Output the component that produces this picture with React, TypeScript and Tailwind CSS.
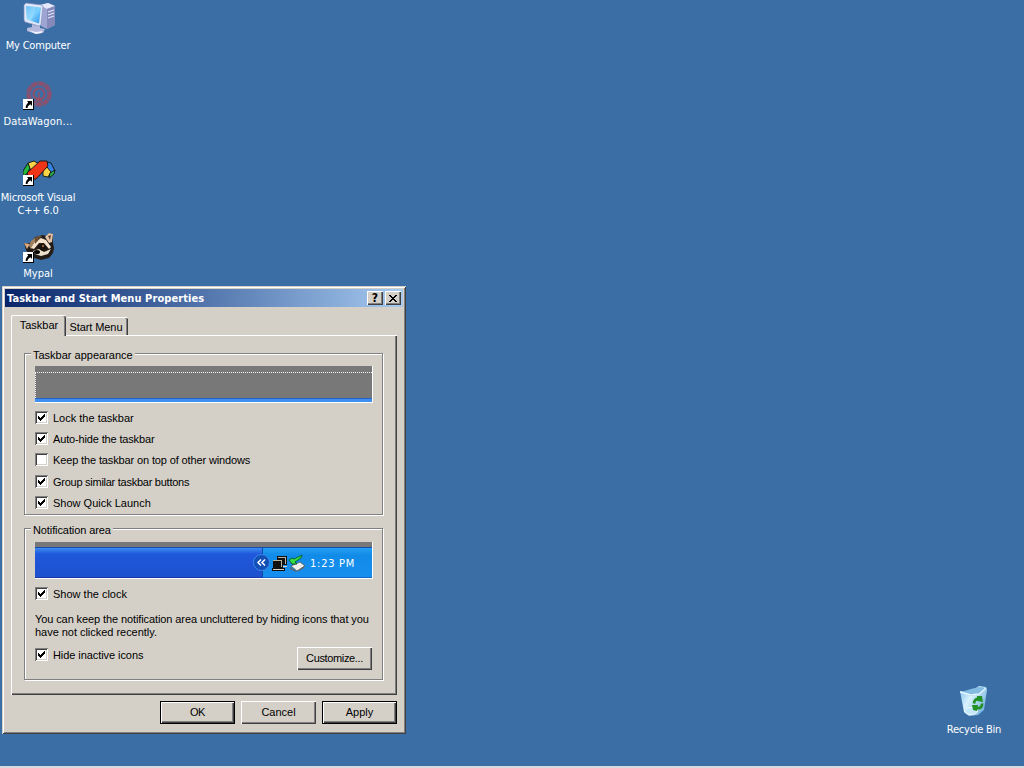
import type { ReactNode } from "react";

const SANS = "font-['Liberation_Sans',Arial,sans-serif]";
const TAHOMA = "font-['DejaVu_Sans_Condensed','DejaVu_Sans',sans-serif]";

const raised =
  "bg-[#d4d0c8] shadow-[inset_1px_1px_0_#fff,inset_-1px_-1px_0_#404040,inset_-2px_-2px_0_#808080]";

function ShortcutArrow() {
  return (
    <g>
      <rect x="0" y="22" width="11" height="11" fill="#000" />
      <rect x="0" y="22" width="10" height="10" fill="#fff" />
      <path d="M4 24h5v5l-1.700-1.700C5.500 28.500 4.500 29.500 4.500 31H2.800c-.3-2 .8-4 2.500-5.400z" fill="#000" />
    </g>
  );
}

function ComputerIcon() {
  return (
    <svg width="34" height="34" viewBox="0 0 34 34">
      <defs>
        <linearGradient id="scr" x1="0" y1="0" x2="1" y2="1">
          <stop offset="0" stopColor="#3ba6f0" />
          <stop offset=".5" stopColor="#7dd2ff" />
          <stop offset="1" stopColor="#2b8fe6" />
        </linearGradient>
      </defs>
      <path d="M17 3l8-2 7 3v19l-8 4-6-3z" fill="#9fa5d2" />
      <path d="M17 3l8-2 7 3-8 3z" fill="#e6e9f9" />
      <path d="M24 7l8-3v19l-8 4z" fill="#8489ba" />
      <path d="M25 10l6-2M25 13l6-2M25 16l6-2" stroke="#dfe4ff" strokeWidth="1.300" />
      <path d="M9 21l8 2v3l5 1-2 4-7 1-9-3v-3l5-1z" fill="#b3b8dc" />
      <path d="M5 28l8 2 7-1-2 2-5 1z" fill="#f2f3fc" />
      <path d="M1 3l2-2 16 2 1 2-2 18-2 1-14-4-1-2z" fill="#dfe6f8" stroke="#7f8cbc" strokeWidth=".7" />
      <path d="M3 4l15 1.500-2 16-12-4z" fill="url(#scr)" />
      <path d="M3 4l10 1-5 14-4-1.500z" fill="#b7e9ff" opacity=".4" />
    </svg>
  );
}

function DataWagonIcon() {
  return (
    <svg width="34" height="34" viewBox="0 0 34 34">
      <g fill="none" stroke="#a04a60">
        <circle cx="16" cy="17" r="10.500" strokeWidth="4.500" opacity=".45" />
        <circle cx="16" cy="17" r="10.500" strokeWidth="4" strokeDasharray="5 2" opacity=".6" />
        <circle cx="16" cy="17" r="5.500" strokeWidth="2.200" opacity=".8" />
        <path d="M16 15v11M13 25l3-5 3 5" strokeWidth="1.600" opacity=".8" />
      </g>
      <ShortcutArrow />
    </svg>
  );
}

function VisualCIcon() {
  return (
    <svg width="34" height="34" viewBox="0 0 34 34">
      <g stroke="#111" strokeWidth=".9" strokeLinejoin="round">
        <path d="M0 18l5-8 2 5-3 6-4 2z" fill="#25b83d" />
        <path d="M5 10l6-2 5 3-3 5-5 2z" fill="#f6d548" />
        <path d="M24 9l4 1 4 8-4 2-4-5z" fill="#3484e8" />
        <path d="M20 18l4-4 4 5-3 5-5-1z" fill="#f6d548" />
        <path d="M27 20l5-3-1 4-5 4z" fill="#29b34b" />
        <path d="M17 8l7 0 1 5-12 13-7 0-2-6z" fill="#ee3518" />
      </g>
      <ShortcutArrow />
    </svg>
  );
}

function RaccoonIcon() {
  return (
    <svg width="34" height="34" viewBox="0 0 34 34">
      <path d="M1 13l6 0 5-6 8-2 3 1 3-3 4 1 0 9 1 5-1 5-4 5-8 2-10-3-5-7z" fill="#241d17" />
      <path d="M22 7l4-4 4 1-1 8-3 1z" fill="#e3c3aa" />
      <path d="M25 6l3-1-1 5z" fill="#65452d" />
      <path d="M1 13l6 1-3 5z" fill="#d5aa85" />
      <path d="M8 11l5-4 5-1-7 9-3 4-2-3z" fill="#a08260" />
      <path d="M18 8l5 2 5 7-2 2-5-6-5 0-5 6-3-1 4-6z" fill="#f5e3cd" />
      <path d="M10 21l6-2 5 3 7-3-3 5-7 2-6-2z" fill="#eee0cb" />
      <path d="M12 7l7-1-7 8z" fill="#684c34" />
      <path d="M14 17l4-3 5 2 2 3-6 2z" fill="#19130e" />
      <ellipse cx="14" cy="22" rx="3" ry="2" fill="#080807" />
      <circle cx="20" cy="16" r="1" fill="#b67b3f" />
      <ShortcutArrow />
    </svg>
  );
}

function RecycleIcon() {
  return (
    <svg width="34" height="34" viewBox="0 0 34 34">
      <defs>
        <linearGradient id="bin" x1="0" y1="0" x2="1" y2=".6">
          <stop offset="0" stopColor="#80c0e8" />
          <stop offset=".45" stopColor="#d9f2ff" />
          <stop offset="1" stopColor="#74b3dc" />
        </linearGradient>
      </defs>
      <path d="M1 6l11 1 8-6 7 1 1 3-3 20-6 5-9 1-5-4z" fill="url(#bin)" />
      <path d="M2 7l10-3 8-2 7 1-7 6-8 2z" fill="#84bbe0" />
      <path d="M1 7l11 3 8-1 7-6" fill="none" stroke="#e5f7ff" strokeWidth="1.300" />
      <ellipse cx="12" cy="26" rx="6.500" ry="3.500" fill="#c5e7fa" stroke="#edfaff" />
      <g fill="none" stroke="#239226" strokeWidth="2.800">
        <path d="M15 18.500q.5-5 5.500-4.500" />
        <path d="M23 18.500q.5 5-5 4.500" />
      </g>
      <path d="M18 11l5 0 1 6-6-1zM13 20l6 0-1 6-4-1z" fill="#239226" />
    </svg>
  );
}

function DesktopIcon({ place, icon, children }: { place: string; icon: ReactNode; children: ReactNode }) {
  return (
    <div className={`absolute flex w-[78px] flex-col items-center text-center text-[11px] leading-[13px] whitespace-nowrap text-white ${TAHOMA} ${place}`}>
      <div className="ml-[4px]">{icon}</div>
      {children}
    </div>
  );
}

function Check({ label, checked = true, className = "", track }: { label: string; checked?: boolean; className?: string; track: string }) {
  return (
    <div className={`flex h-[13px] items-start ${className}`}>
      <span className="flex size-[13px] shrink-0 items-center justify-center bg-white shadow-[inset_1px_1px_0_#808080,inset_-1px_-1px_0_#fff,inset_2px_2px_0_#404040,inset_-2px_-2px_0_#d4d0c8]">
        {checked && (
          <svg width="7" height="7" viewBox="0 0 7 7" shapeRendering="crispEdges">
            <path d="M0 2h1v1h1v1h1v-1h1v-1h1v-1h1v-1h1v3h-1v1h-1v1h-1v1h-1v1h-1v-1h-1v-1h-1z" fill="#000" />
          </svg>
        )}
      </span>
      <span className={`mt-px ml-[5px] whitespace-nowrap ${track}`}>{label}</span>
    </div>
  );
}

function Group({ title, className, children, track }: { title: string; className: string; children: ReactNode; track: string }) {
  return (
    <section className={`relative w-[359px] border border-[#808080] px-[10px] shadow-[1px_1px_0_#fff,inset_1px_1px_0_#fff] ${className}`}>
      <h2 className={`absolute -top-[5px] left-[6px] bg-[#d4d0c8] px-[2px] leading-[13px] whitespace-nowrap ${track}`}>{title}</h2>
      {children}
    </section>
  );
}

function Button({ label, strong = false, className = "" }: { label: string; strong?: boolean; className?: string }) {
  return (
    <button className={`flex h-[23px] w-[75px] items-center justify-center ${strong ? "border border-black" : ""} ${raised} ${className}`}>
      {label}
    </button>
  );
}

function TrayIcons() {
  return (
    <svg className="shrink-0" width="58" height="22" viewBox="0 0 58 22">
      <circle cx="9.500" cy="10.500" r="8" fill="#1250b8" stroke="#3c8be8" />
      <path d="M9 7.500L6 10.500l3 3M13 7.500L10 10.500l3 3" fill="none" stroke="#fff" strokeWidth="1.500" />
      <g shapeRendering="crispEdges">
        <path d="M25 4h10v9h-10z" fill="#111" />
        <path d="M26 5h8v1h-8zM33 6h1v6h-1z" fill="#b9b4a0" />
        <path d="M21 8h10v8h-10z" fill="#111" />
        <path d="M21 8h9v1h-9zM29 9h1v6h-1z" fill="#b9b4a0" />
        <path d="M20 16h13v3H20z" fill="#111" />
        <path d="M21 17h11v1H21zM31 14h4v1h-4z" fill="#d5d0bd" />
      </g>
      <path d="M39 14l9-4 5 4-8 5z" fill="#eee" stroke="#555" strokeWidth=".8" />
      <path d="M38 15l6 4v1l-6-3zM45 19l7-5v2l-7 4z" fill="#666" />
      <path d="M37 8l3-2 2 1 8-4-1 3-6 4 2 2-5 0z" fill="#35dc44" stroke="#064c18" strokeWidth=".8" />
    </svg>
  );
}

export default function App() {
  return (
    <main className={`relative h-[768px] w-[1024px] overflow-hidden border-b-2 border-[#d8dce0] bg-[#3a6ea5] text-[11px] leading-[13px] text-black ${SANS}`}>
      <DesktopIcon place="-left-px top-[2px]" icon={<ComputerIcon />}><div className="mt-[3px] tracking-[-0.2px]">My Computer</div></DesktopIcon>
      <DesktopIcon place="-left-px top-[77px]" icon={<DataWagonIcon />}><div className="mt-[4px] tracking-[0.2px]">DataWagon...</div></DesktopIcon>
      <DesktopIcon place="-left-px top-[153px]" icon={<VisualCIcon />}><div className="mt-[4px] tracking-[-0.2px]">Microsoft Visual<br />C++ 6.0</div></DesktopIcon>
      <DesktopIcon place="-left-px top-[230px]" icon={<RaccoonIcon />}><div className="mt-[3px]">Mypal</div></DesktopIcon>
      <DesktopIcon place="left-[935px] top-[685px]" icon={<RecycleIcon />}><div className="mt-[4px] tracking-[-0.25px]">Recycle Bin</div></DesktopIcon>

      <div className="absolute top-[286px] left-[2px] h-[448px] w-[404px] bg-[#d4d0c8] p-[3px] shadow-[inset_1px_1px_0_#d4d0c8,inset_-1px_-1px_0_#404040,inset_2px_2px_0_#fff,inset_-2px_-2px_0_#808080]">
        <header className={`flex h-[18px] items-center bg-linear-to-r from-[#0a246a] to-[#a6caf0] pr-[2px] pl-[2px] font-bold text-white ${TAHOMA}`}>
          <h1 className="flex-1 tracking-[0.07px] whitespace-nowrap">Taskbar and Start Menu Properties</h1>
          <button className={`mr-[2px] flex h-[14px] w-4 items-center justify-center text-[12px] leading-none text-black ${raised}`}>?</button>
          <button className={`flex h-[14px] w-4 items-center justify-center ${raised}`}>
            <svg width="8" height="7" viewBox="0 0 8 7" shapeRendering="crispEdges">
              <path d="M0 0h2v1h1v1h2v-1h1v-1h2v1h-1v1h-1v1h-1v1h1v1h1v1h1v1h-2v-1h-1v-1h-2v1h-1v1h-2v-1h1v-1h1v-1h1v-1h-1v-1h-1v-1h-1z" fill="#000" />
            </svg>
          </button>
        </header>

        <div className="mt-[8px] ml-[6px] flex h-[20px] items-end">
          <div className="relative z-10 -mb-px flex h-[21px] w-[55px] justify-center rounded-t-[2px] border-t border-l border-white bg-[#d4d0c8] pt-[3px] shadow-[inset_-1px_0_0_#404040,inset_-2px_0_0_#808080]">Taskbar</div>
          <div className="flex h-[18px] w-[62px] justify-center rounded-t-[2px] border-t border-white pt-[3px] pr-[2px] tracking-[-0.1px] whitespace-nowrap shadow-[inset_-1px_0_0_#404040,inset_-2px_0_0_#808080]">Start Menu</div>
        </div>

        <div className="ml-[6px] h-[360px] w-[386px] border-t border-l border-white pt-[17px] pl-[12px] shadow-[inset_-1px_-1px_0_#404040,inset_-2px_-2px_0_#808080]">
          <Group title="Taskbar appearance" className="h-[162px] pt-[12px]" track="tracking-[0px]">
            <div className="flex h-[37px] w-[338px] flex-col border-r border-b border-white bg-[#787878] pt-[6px]">
              <div className="flex-1 border-t border-l border-dotted border-[#f4f4f4]" />
              <div className="h-[4px] border-t border-[#2a62c8] bg-[#3f8ff0]" />
            </div>
            <Check label="Lock the taskbar" className="mt-[8px]" track="tracking-[0px]" />
            <Check label="Auto-hide the taskbar" className="mt-[8px]" track="tracking-[-0.15px]" />
            <Check label="Keep the taskbar on top of other windows" checked={false} className="mt-[8px]" track="tracking-[-0.13px]" />
            <Check label="Group similar taskbar buttons" className="mt-[9px]" track="tracking-[-0.26px]" />
            <Check label="Show Quick Launch" className="mt-[8px]" track="tracking-[0px]" />
          </Group>

          <Group title="Notification area" className="mt-[13px] h-[152px] pt-[13px]" track="tracking-[-0.1px]">
            <div className="h-[37px] w-[338px] border-r border-b border-white bg-[#787878] pt-[5px]">
              <div className="flex h-[31px] border-t border-[#164bb0] bg-linear-to-b from-[#3f8cf0] via-[#2058dc] via-20% to-[#1d50cc]">
                <div className="w-[227px] border-b border-[#183aa2]" />
                <div className="flex flex-1 items-center border-b border-l border-b-[#1268c4] border-l-[#1045a0] bg-linear-to-b from-[#23a0f4] via-[#118be8] via-25% to-[#168ff0]">
                  <div className="-ml-[11px] flex items-center">
                    <TrayIcons />
                    <span className={`mt-px tracking-[0.75px] whitespace-nowrap text-white ${TAHOMA}`}>1:23 PM</span>
                  </div>
                </div>
              </div>
            </div>
            <Check label="Show the clock" className="mt-[8px]" track="tracking-[0px]" />
            <p className="mt-[13px] whitespace-nowrap"><span className="tracking-[-0.1px]">You can keep the notification area uncluttered by hiding icons that you</span><br /><span className="tracking-[-0.03px]">have not clicked recently.</span></p>
            <div className="mt-[8px] flex items-start">
              <Check label="Hide inactive icons" className="mt-px flex-1" track="tracking-[-0.07px]" />
              <Button label="Customize..." className="tracking-[-0.35px]" />
            </div>
          </Group>
        </div>

        <footer className="mt-[6px] flex justify-end gap-[6px] pr-[6px]">
          <Button label="OK" strong className="tracking-[-0.4px]" />
          <Button label="Cancel" />
          <Button label="Apply" strong />
        </footer>
      </div>
    </main>
  );
}
